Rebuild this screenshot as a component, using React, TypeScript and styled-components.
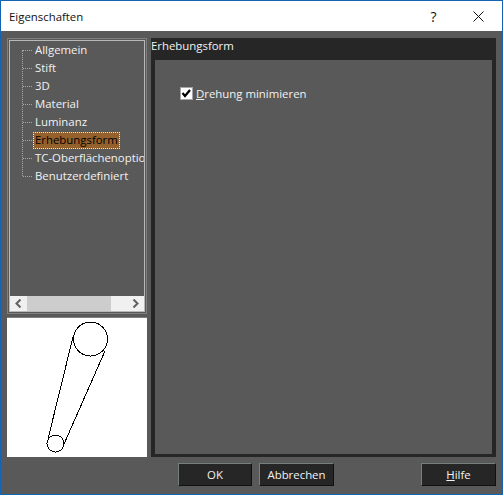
import React from "react";
import styled, { createGlobalStyle } from "styled-components";

const Global = createGlobalStyle`
  html, body { margin: 0; padding: 0; background: #595959; }
  * { box-sizing: border-box; }
`;

const Win = styled.div`
  width: 503px; height: 495px;
  border: 1px solid #1464b4;
  background: #595959;
  display: flex; flex-direction: column;
  font: 11.4px "Open Sans", "Noto Sans", sans-serif;
  color: #f2f2f2;
  overflow: hidden;
`;
const TitleBar = styled.div`
  height: 30px; flex: none; background: #fff; color: #111;
  display: flex; align-items: center; padding-left: 8px; padding-right: 1px;
`;
const Title = styled.div`flex: 1;`;
const TitleBtn = styled.div`
  width: 45px; height: 30px; display: flex; align-items: center; justify-content: center;
  font-size: 14px; color: #111;
`;
const Content = styled.div`
  flex: 1; display: flex; gap: 4px; padding: 7px 6px 0 6px; min-height: 0;
`;
const LeftCol = styled.div`
  width: 140px; flex: none; display: flex; flex-direction: column; gap: 3px;
`;
const TreeBox = styled.div`
  height: 277px; border: 1px solid #7f7f7f; padding: 1px;
  display: flex; flex-direction: column;
`;
const TreeInner = styled.div`
  flex: 1; border: 1px solid #b8b8b8; display: flex; flex-direction: column; min-height: 0;
`;
const Tree = styled.div`
  flex: 1; position: relative; overflow: hidden;
`;
const VLine = styled.div`
  position: absolute; left: 12px; top: 9px; height: 126px; border-left: 1px dotted #a8a8a8;
`;
const Row = styled.div`
  height: 18px; display: flex; align-items: center; white-space: nowrap; position: relative; padding-left: 23px;
  &::before { content: ""; position: absolute; left: 13px; top: 9px; width: 9px; border-top: 1px dotted #a8a8a8; }
`;
const RowLabel = styled.span<{ $sel?: boolean }>`
  display: inline-block; height: 17px; line-height: 16px; padding: 0 2px;
  ${(p) => p.$sel ? `background: #94602c; color: #000; outline: 1px dotted #e8e8e8; outline-offset: -1px;` : ""}
`;
const Scroll = styled.div`
  height: 15px; background: #f0f0f0; display: flex; align-items: center; flex: none;
`;
const ScrollBtn = styled.div`
  width: 17px; height: 15px; flex: none; display: flex; align-items: center; justify-content: center;
`;
const Thumb = styled.div`
  width: 84px; height: 15px; background: #cdcdcd;
`;
const Spacer = styled.div`flex: 1;`;
const Preview = styled.div`
  height: 140px; background: #fff; border-top: 1px solid #7f7f7f; flex: none; display: flex;
`;
const RightCol = styled.div`
  flex: 1; height: 419px; background: #262626; display: flex; flex-direction: column;
  padding: 0 4px 3px 4px;
`;
const Header = styled.div`
  height: 22px; margin-left: -4px; line-height: 16px; flex: none;
`;
const Page = styled.div`
  flex: 1; background: #595959; padding: 26px 0 0 25px;
`;
const Check = styled.label`
  display: flex; align-items: center; gap: 3px; height: 14px;
`;
const CheckBox = styled.span`
  width: 13px; height: 13px; background: #fff; border: 1px solid #a6a6a6; display: flex; align-items: center; justify-content: center;
`;
const Underline = styled.span`text-decoration: underline;`;
const Footer = styled.div`
  height: 37px; flex: none; display: flex; align-items: flex-start; padding: 6px 6px 0 177px; gap: 7px;
`;
const Btn = styled.div<{ $w: number; $push?: boolean }>`
  width: ${(p) => p.$w}px; height: 23px; background: #262626;
  border: 1px solid; border-color: #76807f #111 #111 #76807f;
  display: flex; align-items: center; justify-content: center;
  ${(p) => p.$push ? "margin-left: auto;" : ""}
`;

const items = ["Allgemein", "Stift", "3D", "Material", "Luminanz", "Erhebungsform", "TC-Oberflächenoptionen", "Benutzerdefiniert"];

export default function App() {
  return (
    <Win>
      <Global />
      <TitleBar>
        <Title>Eigenschaften</Title>
        <TitleBtn>?</TitleBtn>
        <TitleBtn>
          <svg width="11" height="11" viewBox="0 0 11 11"><path d="M0.5 0.5L10.5 10.5M10.5 0.5L0.5 10.5" stroke="#111" strokeWidth="1" /></svg>
        </TitleBtn>
      </TitleBar>
      <Content>
        <LeftCol>
          <TreeBox>
            <TreeInner>
              <Tree>
                <VLine />
                {items.map((t, i) => (
                  <Row key={t}><RowLabel $sel={i === 5}>{t}</RowLabel></Row>
                ))}
              </Tree>
              <Scroll>
                <ScrollBtn>
                  <svg width="7" height="9" viewBox="0 0 7 9"><path d="M5.5 0.5L1.5 4.5L5.5 8.5" fill="none" stroke="#606060" strokeWidth="2" /></svg>
                </ScrollBtn>
                <Thumb />
                <Spacer />
                <ScrollBtn>
                  <svg width="7" height="9" viewBox="0 0 7 9"><path d="M1.5 0.5L5.5 4.5L1.5 8.5" fill="none" stroke="#606060" strokeWidth="2" /></svg>
                </ScrollBtn>
              </Scroll>
            </TreeInner>
          </TreeBox>
          <Preview>
            <svg width="140" height="139" viewBox="7 319 140 139" shapeRendering="crispEdges">
              <g fill="none" stroke="#000" strokeWidth="1">
                <circle cx="90.5" cy="340" r="17" />
                <circle cx="55.5" cy="444.5" r="8.5" />
                <path d="M73 338L48 440M105 352L64 445" />
              </g>
            </svg>
          </Preview>
        </LeftCol>
        <RightCol>
          <Header>Erhebungsform</Header>
          <Page>
            <Check>
              <CheckBox>
                <svg width="11" height="11" viewBox="0 0 11 11"><path d="M1.5 5L4 8L9 2" fill="none" stroke="#000" strokeWidth="2.2" /></svg>
              </CheckBox>
              <span><Underline>D</Underline>rehung minimieren</span>
            </Check>
          </Page>
        </RightCol>
      </Content>
      <Footer>
        <Btn $w={74}>OK</Btn>
        <Btn $w={75}>Abbrechen</Btn>
        <Btn $w={75} $push><span><Underline>H</Underline>ilfe</span></Btn>
      </Footer>
    </Win>
  );
}
